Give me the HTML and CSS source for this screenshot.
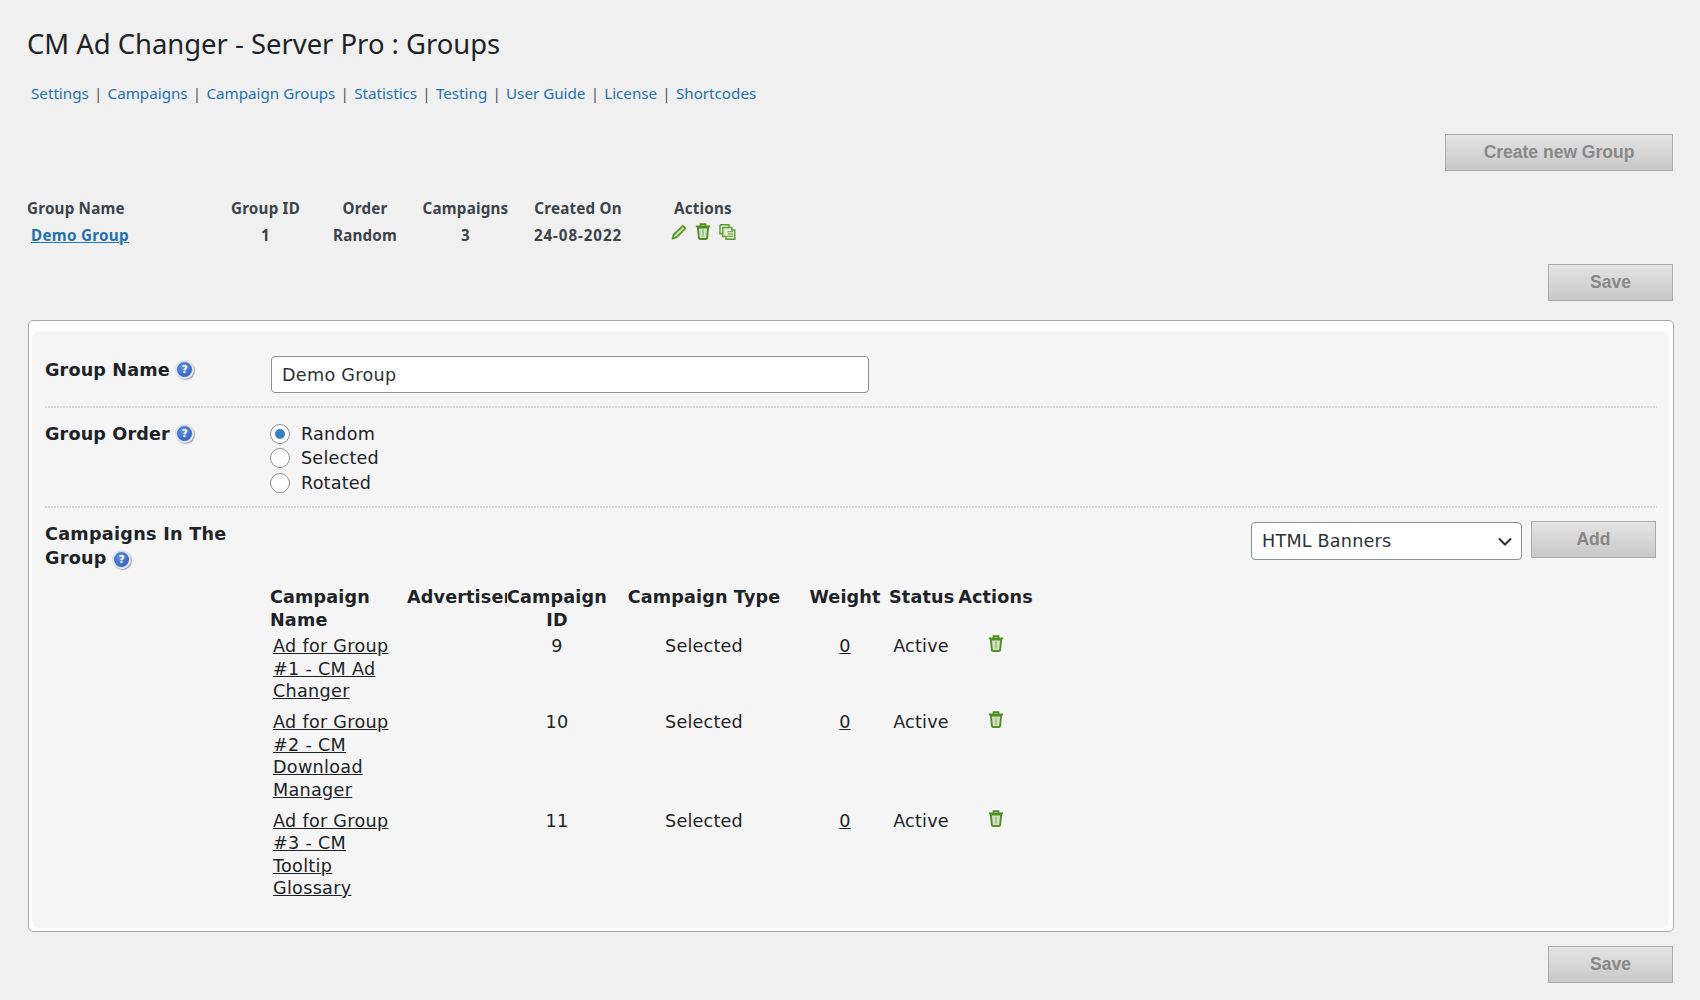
FILE: index.html
```html
<!DOCTYPE html>
<html lang="en">
<head>
    <meta charset="UTF-8">
    <title>CM Ad Changer - Server Pro : Groups</title>
    <link rel="stylesheet" href="styles.css">
</head>
<body>
    <svg class="icon-defs" width="0" height="0">
        <symbol id="icon-trash" viewBox="0 0 15 16">
            <path d="M5.200 2.400V1h4.600v1.400M.8 3.200h13.400" fill="none" stroke="currentColor" stroke-width="1.700"/>
            <path d="M2.700 4.200h9.600l-.9 9.800q-.1 1.100-1.200 1.100H4.800q-1.100 0-1.200-1.100z" fill="#d3e2c6" stroke="currentColor" stroke-width="1.800"/>
            <path d="M7.500 6v7" stroke="#9cc07c" stroke-width="1.500"/>
        </symbol>
    </svg>

    <div class="wrap">
        <h1>CM Ad Changer - Server Pro : Groups</h1>

        <nav class="main-nav">
            <a href="#">Settings</a><span>|</span>
            <a href="#">Campaigns</a><span>|</span>
            <a href="#">Campaign Groups</a><span>|</span>
            <a href="#">Statistics</a><span>|</span>
            <a href="#">Testing</a><span>|</span>
            <a href="#">User Guide</a><span>|</span>
            <a href="#">License</a><span>|</span>
            <a href="#">Shortcodes</a>
        </nav>

        <div class="button-row create-row">
            <button class="btn btn-create" type="button">Create new Group</button>
        </div>

        <table class="groups-table">
            <thead>
                <tr>
                    <th class="col-name">Group Name</th>
                    <th class="col-id">Group ID</th>
                    <th class="col-order">Order</th>
                    <th class="col-count">Campaigns</th>
                    <th class="col-date">Created On</th>
                    <th class="col-actions">Actions</th>
                </tr>
            </thead>
            <tbody>
                <tr>
                    <td class="col-name"><a href="#">Demo Group</a></td>
                    <td>1</td>
                    <td>Random</td>
                    <td>3</td>
                    <td class="created">24-08-2022</td>
                    <td>
                        <span class="group-icons">
                            <svg class="icon" width="16" height="16" viewBox="0 0 16 16">
                                <path d="M11.800 1.800l2.600 2.600-8.600 8.800-4.200 1.400 1.200-4.100z" fill="#cfe0c0" stroke="#5a9a2a" stroke-width="1.800" stroke-linejoin="round"/>
                            </svg>
                            <svg class="icon trash" width="16" height="17"><use href="#icon-trash"/></svg>
                            <svg class="icon" width="17" height="16" viewBox="0 0 17 16">
                                <path d="M1 .8h9v2.500M1 .8v9h2.500" fill="none" stroke="#5a9a2a" stroke-width="1.400"/>
                                <path d="M3.800 3.500h9v2.500h3v9.200H7v-2.700H3.800z" fill="#e3edd9" stroke="#5a9a2a" stroke-width="1.400"/>
                                <path d="M8.500 7.800h5.500M8.500 10h5.500M8.500 12.200h5.500" stroke="#5a9a2a" stroke-width="1.100"/>
                            </svg>
                        </span>
                    </td>
                </tr>
            </tbody>
        </table>

        <div class="button-row save-top">
            <button class="btn btn-save" type="button">Save</button>
        </div>

        <div class="panel">
            <div class="panel-inner">
                <div class="form-row row-name">
                    <div class="form-label">Group Name <span class="help">?</span></div>
                    <div><input class="text-input" type="text" value="Demo Group"></div>
                </div>

                <div class="form-row row-order">
                    <div class="form-label">Group Order <span class="help">?</span></div>
                    <div class="radio-list">
                        <label><input type="radio" name="order" checked> Random</label>
                        <label><input type="radio" name="order"> Selected</label>
                        <label><input type="radio" name="order"> Rotated</label>
                    </div>
                </div>

                <div class="form-row row-campaigns">
                    <div class="form-label">Campaigns In The Group <span class="help">?</span></div>
                    <div>
                        <div class="add-controls">
                            <select class="type-select">
                                <option>HTML Banners</option>
                            </select>
                            <button class="btn btn-add" type="button">Add</button>
                        </div>

                        <table class="campaigns-table">
                            <colgroup>
                                <col class="c-name">
                                <col class="c-adv">
                                <col class="c-id">
                                <col class="c-type">
                                <col class="c-weight">
                                <col class="c-status">
                                <col class="c-actions">
                            </colgroup>
                            <thead>
                                <tr>
                                    <th class="left first">Campaign Name</th>
                                    <th class="left clip">Advertiser</th>
                                    <th>Campaign ID</th>
                                    <th>Campaign Type</th>
                                    <th>Weight</th>
                                    <th>Status</th>
                                    <th>Actions</th>
                                </tr>
                            </thead>
                            <tbody>
                                <tr>
                                    <td class="left"><a href="#">Ad for Group #1 - CM Ad Changer</a></td>
                                    <td></td>
                                    <td>9</td>
                                    <td>Selected</td>
                                    <td><a href="#">0</a></td>
                                    <td>Active</td>
                                    <td><svg class="icon trash" width="16" height="17"><use href="#icon-trash"/></svg></td>
                                </tr>
                                <tr>
                                    <td class="left"><a href="#">Ad for Group #2 - CM Download Manager</a></td>
                                    <td></td>
                                    <td>10</td>
                                    <td>Selected</td>
                                    <td><a href="#">0</a></td>
                                    <td>Active</td>
                                    <td><svg class="icon trash" width="16" height="17"><use href="#icon-trash"/></svg></td>
                                </tr>
                                <tr>
                                    <td class="left"><a href="#">Ad for Group #3 - CM Tooltip Glossary</a></td>
                                    <td></td>
                                    <td>11</td>
                                    <td>Selected</td>
                                    <td><a href="#">0</a></td>
                                    <td>Active</td>
                                    <td><svg class="icon trash" width="16" height="17"><use href="#icon-trash"/></svg></td>
                                </tr>
                            </tbody>
                        </table>
                    </div>
                </div>
            </div>
        </div>

        <div class="button-row save-bottom">
            <button class="btn btn-save" type="button">Save</button>
        </div>
    </div>
</body>
</html>
```

FILE: styles.css
```css
html, body {
    margin: 0;
    background: #f0f0f0;
}
body {
    font-family: 'Noto Sans', sans-serif;
    color: #1d2327;
    font-size: 14px;
}
.icon-defs {
    position: absolute;
}
.wrap {
    padding: 25px 27px 0 28px;
}
h1 {
    margin: 0 0 0 -1px;
    font-size: 27.4px;
    line-height: 38px;
    font-weight: 400;
    color: #1d2327;
}
.main-nav {
    display: flex;
    gap: 5.200px;
    margin: 20px 0 0 3px;
    line-height: 20px;
    font-size: 15.200px;
    color: #50575e;
}
.main-nav a {
    color: #2271b1;
    text-decoration: none;
}
.button-row {
    display: flex;
    justify-content: flex-end;
}
.create-row {
    margin-top: 31px;
}
.btn {
    height: 37px;
    padding: 0;
    border: 1px solid #aaa;
    background: linear-gradient(to bottom, #e4e4e4, #c8c8c8);
    font-family: 'Liberation Sans', sans-serif;
    font-size: 17.500px;
    font-weight: 700;
    color: #888;
    box-sizing: border-box;
}
.btn-create {
    width: 228px;
}
.btn-save,
.btn-add {
    width: 125px;
}
.groups-table {
    margin: 23px 0 0 -1px;
    border-collapse: collapse;
    table-layout: fixed;
    width: 735px;
    font-size: 15.200px;
    letter-spacing: 0.2px;
    color: #3c434a;
}
.groups-table th,
.groups-table td {
    padding: 0;
    height: 27px;
    line-height: 20px;
    font-weight: 700;
    text-align: center;
}
.groups-table .col-name {
    width: 193px;
    text-align: left;
}
.groups-table td.col-name {
    padding-left: 4px;
    letter-spacing: 0.3px;
}
.groups-table .col-id {
    width: 91px;
}
.groups-table .col-order {
    width: 108px;
}
.groups-table .col-count {
    width: 93px;
}
.groups-table .col-date {
    width: 132px;
}
.groups-table .created {
    letter-spacing: 0.9px;
}
.groups-table a {
    color: #2271b1;
}
.group-icons {
    display: inline-flex;
    gap: 8px;
    align-items: center;
    position: relative;
    top: -1px;
}
.icon {
    display: block;
}
.trash {
    color: #4f8f22;
}
.save-top {
    margin-top: 15.500px;
}
.panel {
    margin: 19px -1px 0 0;
    padding: 10px 4px 3px 3px;
    border: 1px solid #aaa;
    border-radius: 5px;
    background: #fff;
}
.panel-inner {
    padding: 0 12px 24px 13px;
    border-radius: 8px;
    background: #f5f5f5;
    font-family: 'DejaVu Sans', sans-serif;
    font-size: 17.600px;
    letter-spacing: 0.2px;
    line-height: 22.500px;
    color: #1d2327;
}
.form-row {
    display: grid;
    grid-template-columns: 225px 1fr;
}
/* dotted rule: 2px dots every 3px, a plain dotted border spaces them differently */
.row-name,
.row-order {
    background: linear-gradient(to right, #d8d8d8 2px, transparent 2px) left bottom / 3px 2px repeat-x;
}
.row-name {
    padding: 25px 0 15px;
}
.row-order {
    padding: 14px 0 13px;
}
.row-campaigns {
    padding-top: 13px;
}
.form-label {
    font-weight: 700;
    letter-spacing: 0.15px;
    width: 190px;
}
.row-name .form-label {
    margin-top: 3px;
}
.row-order .form-label {
    margin-top: 1px;
}
.row-campaigns .form-label {
    margin-top: 1px;
    letter-spacing: 0.28px;
    line-height: 24px;
}
.help {
    display: inline-block;
    width: 15px;
    height: 15px;
    margin-left: -1px;
    border: 2px solid #dbe3f0;
    border-radius: 50%;
    background: radial-gradient(circle at 40% 35%, #5f90e0, #2456b4);
    box-shadow: 1px 1px 1px #a0a0a0;
    color: #fff;
    font-size: 11px;
    font-weight: 700;
    letter-spacing: 0;
    line-height: 15px;
    text-align: center;
    vertical-align: 3px;
}
.row-campaigns .help {
    vertical-align: 1px;
}
.text-input {
    display: block;
    width: 598px;
    height: 37px;
    margin-left: 1px;
    padding: 2px 10px 0;
    border: 1px solid #8c8f94;
    border-radius: 4px;
    background: #fff;
    font: inherit;
    letter-spacing: 0.3px;
    color: #2c3338;
    box-sizing: border-box;
}
.radio-list label {
    display: flex;
    align-items: center;
    gap: 11px;
    height: 24.500px;
}
.radio-list input {
    appearance: none;
    width: 20px;
    height: 20px;
    margin: 0;
    border: 1px solid #8c8f94;
    border-radius: 50%;
    background: #fff;
    display: flex;
    align-items: center;
    justify-content: center;
}
.radio-list input:checked::before {
    content: "";
    width: 10px;
    height: 10px;
    border-radius: 50%;
    background: #3582c4;
}
.add-controls {
    display: flex;
    justify-content: flex-end;
    align-items: flex-start;
    gap: 9px;
    height: 39px;
    margin-right: 1px;
}
.type-select {
    appearance: none;
    width: 271px;
    height: 38px;
    margin-top: 1px;
    padding: 0 24px 0 10px;
    border: 1px solid #8c8f94;
    border-radius: 4px;
    background: #fff url("data:image/svg+xml,%3Csvg xmlns='http://www.w3.org/2000/svg' width='14' height='9'%3E%3Cpath d='M1 1.500l6 6 6-6' fill='none' stroke='%232c3338' stroke-width='2'/%3E%3C/svg%3E") no-repeat right 9px center;
    font: inherit;
    letter-spacing: inherit;
    color: #2c3338;
}
.campaigns-table {
    margin: 26px 0 0 -1px;
    width: 769px;
    border-collapse: collapse;
    table-layout: fixed;
}
.c-name {
    width: 138px;
}
.c-adv {
    width: 100px;
}
.c-id {
    width: 100px;
}
.c-type {
    width: 194px;
}
.c-weight {
    width: 88px;
}
.c-status {
    width: 64px;
}
.c-actions {
    width: 85px;
}
.campaigns-table th {
    padding: 0;
    font-weight: 700;
    letter-spacing: 0.15px;
    text-align: center;
    vertical-align: top;
}
.campaigns-table td {
    padding: 4px 0 4.500px;
    text-align: center;
    vertical-align: top;
}
.campaigns-table .left {
    text-align: left;
}
.campaigns-table th.first {
    padding-left: 1px;
}
.campaigns-table td.left {
    padding: 4px 12px 4.500px 4px;
    letter-spacing: 0.3px;
}
.campaigns-table .clip {
    overflow: hidden;
    white-space: nowrap;
}
.campaigns-table a {
    color: #1d2327;
}
.campaigns-table .icon {
    margin: 0 auto;
}
.save-bottom {
    margin-top: 14px;
    padding-bottom: 18px;
}
```
